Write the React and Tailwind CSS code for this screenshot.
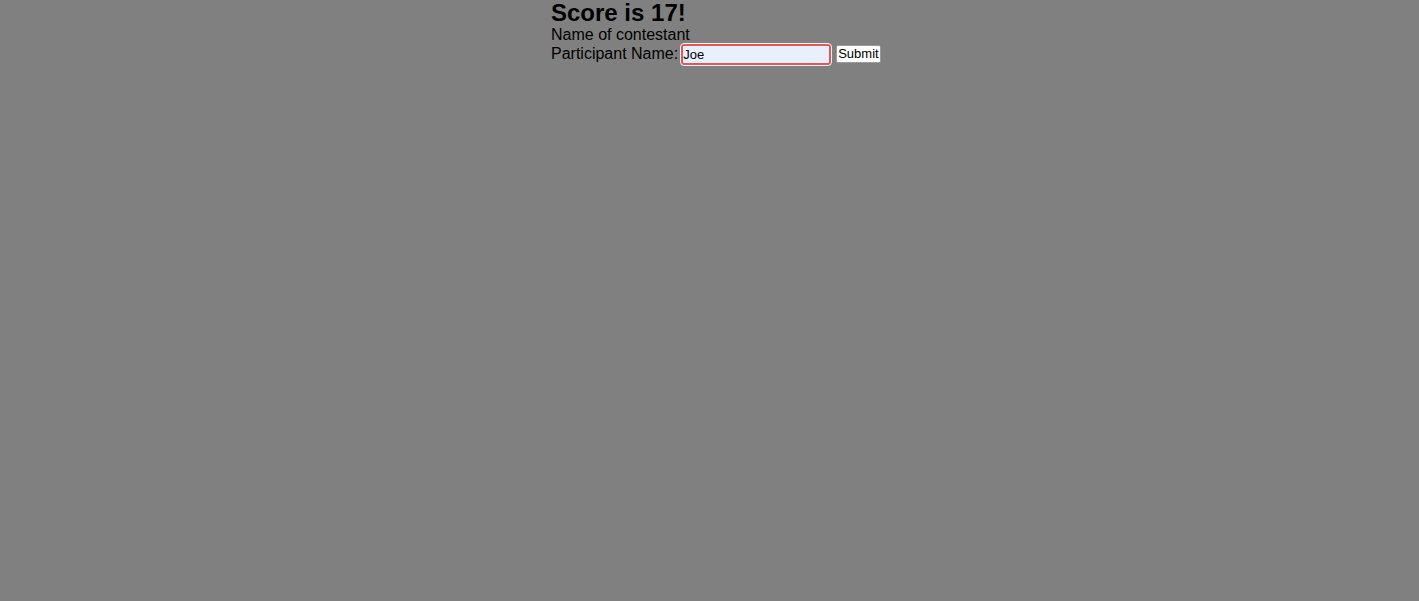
import React from 'react';

export default function App() {
    return (
        <div className="min-h-[601px] w-full bg-[#808080] text-black" style={{ fontFamily: '"Liberation Sans", Arial, sans-serif' }}>
            <div className="ml-[551px] flex flex-col items-start">
                <h1 className="text-[24px] font-bold leading-[26px]">Score is 17!</h1>
                <div className="text-[16px] leading-[18px]">Name of contestant</div>
                <form className="-mt-[1px] flex h-[22px] items-center whitespace-nowrap text-[16px]" onSubmit={(e) => e.preventDefault()}>
                    <label className="leading-[18px]">Participant Name:</label>
                    <input
                        defaultValue="Joe"
                        className="ml-[3px] h-[21px] w-[150px] rounded-[3px] border-2 border-[#e0575b] bg-[#e8f0fe] px-0 text-[13px] outline outline-1 outline-[#f4f4f4] outline-offset-0 focus:outline-none"
                    />
                    <button
                        type="button"
                        className="ml-[5px] h-[18px] rounded-[2px] border border-[#9a9a9a] bg-white px-[1px] text-[13px] leading-[14px]"
                    >
                        Submit
                    </button>
                </form>
            </div>
        </div>
    );
}
